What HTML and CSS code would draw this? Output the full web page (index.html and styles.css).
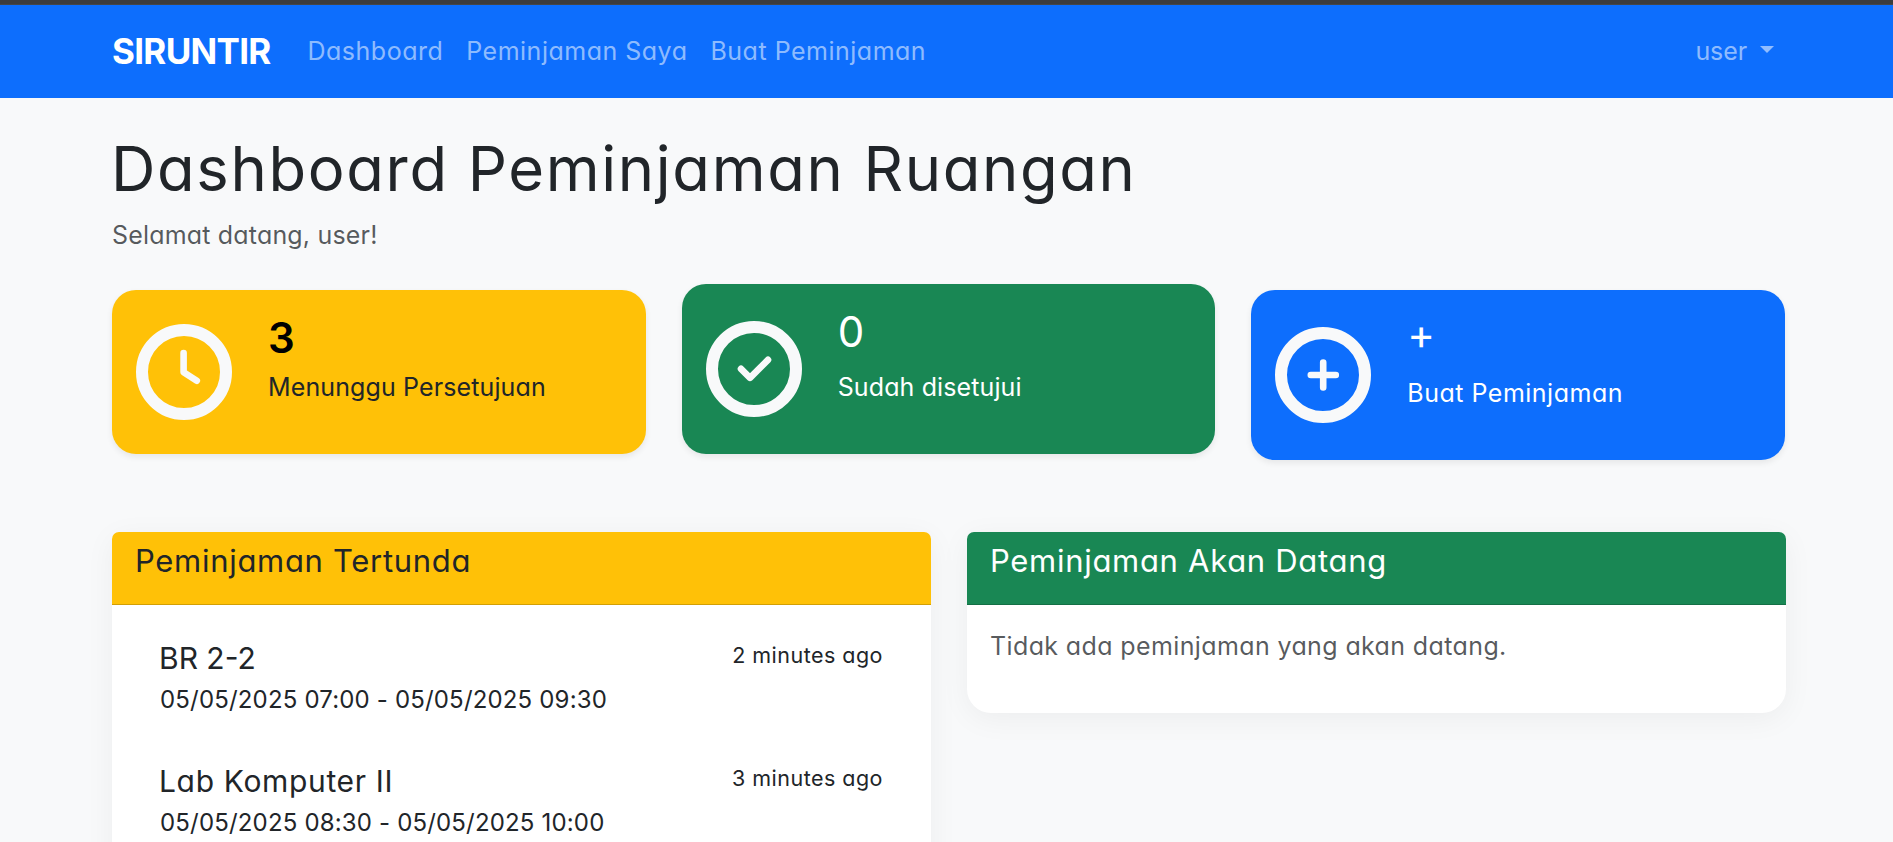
FILE: index.html
```html
<!DOCTYPE html>
<html lang="id">
<head>
<meta charset="utf-8">
<title>SIRUNTIR</title>
<link rel="stylesheet" href="styles.css">
</head>
<body>
<div class="window-edge"></div>
<nav class="navbar">
  <div class="container navbar-inner">
    <a class="brand">SIRUNTIR</a>
    <div class="nav-links">
      <a>Dashboard</a>
      <a>Peminjaman Saya</a>
      <a>Buat Peminjaman</a>
    </div>
    <a class="user-menu"><span>user</span><svg class="caret" viewBox="0 0 14 7"><path d="M0 0h14L7 7z"/></svg></a>
  </div>
</nav>
<main class="container main">
  <h1 class="title">Dashboard Peminjaman Ruangan</h1>
  <p class="welcome">Selamat datang, user!</p>

  <section class="stats">
    <article class="stat stat-warning">
      <svg class="stat-icon" viewBox="0 0 96 96"><circle class="ring" cx="48" cy="48" r="42"/><path class="mark" d="M47.6 29v19.2l13.2 8.6"/></svg>
      <div class="stat-text">
        <div class="stat-value">3</div>
        <p class="stat-label">Menunggu Persetujuan</p>
      </div>
    </article>
    <article class="stat stat-success">
      <svg class="stat-icon" viewBox="0 0 96 96"><circle class="ring" cx="48" cy="48" r="42"/><path class="mark" d="M35 47.8l9 9 18-18"/></svg>
      <div class="stat-text">
        <div class="stat-value">0</div>
        <p class="stat-label">Sudah disetujui</p>
      </div>
    </article>
    <article class="stat stat-primary">
      <svg class="stat-icon" viewBox="0 0 96 96"><circle class="ring" cx="48" cy="48" r="42"/><path class="mark" d="M48.2 35.5v25M35.8 48h25"/></svg>
      <div class="stat-text">
        <div class="stat-value">+</div>
        <p class="stat-label">Buat Peminjaman</p>
      </div>
    </article>
  </section>

  <section class="panels">
    <article class="panel">
      <header class="panel-head head-warning">Peminjaman Tertunda</header>
      <div class="list">
        <div class="item">
          <div>
            <h2 class="room room-code">BR 2-2</h2>
            <p class="period">05/05/2025 07:00 - 05/05/2025 09:30</p>
          </div>
          <span class="ago">2 minutes ago</span>
        </div>
        <div class="item">
          <div>
            <h2 class="room">Lab Komputer II</h2>
            <p class="period">05/05/2025 08:30 - 05/05/2025 10:00</p>
          </div>
          <span class="ago">3 minutes ago</span>
        </div>
      </div>
    </article>
    <article class="panel">
      <header class="panel-head head-success">Peminjaman Akan Datang</header>
      <p class="empty">Tidak ada peminjaman yang akan datang.</p>
    </article>
  </section>
</main>
</body>
</html>
```
FILE: styles.css
```css
* { box-sizing: border-box; }
html, body { height: 842px; overflow: hidden; }
body {
  margin: 0;
  background: #f8f9fa;
  color: #212529;
  font: 400 25px/36px Inter, sans-serif;
  font-feature-settings: "cv11";
}
h1, h2, p { margin: 0; font-weight: 400; }
.container { width: 1674px; margin-left: 112px; }

.window-edge { height: 5px; background: #3c3c3c; border-bottom: 1px solid #464646; }
.navbar { height: 93px; background: #0d6efd; }
.navbar-inner { height: 100%; padding-bottom: 1px; display: flex; align-items: center; }
.brand { width: 195.5px; color: #fff; font-size: 35px; font-weight: 700; letter-spacing: -.7px; }
.nav-links { display: flex; gap: 23px; letter-spacing: .5px; color: rgba(255,255,255,.55); }
.user-menu { margin: 0 12px 0 auto; display: flex; align-items: center; gap: 13px; letter-spacing: -.1px; color: rgba(255,255,255,.55); }
.caret { width: 14px; height: 7px; margin-top: -3px; fill: currentColor; }

.main { padding-top: 35px; }
.title { font-size: 61.5px; line-height: 72px; letter-spacing: 1.65px; margin: 0 0 12px -1px; }
.welcome { margin-bottom: 31px; color: rgba(33,37,41,.75); letter-spacing: .18px; }

.stats { display: grid; grid-template-columns: repeat(3, 1fr); gap: 36px; align-items: start; width: 1673px; margin-bottom: 72px; }
.stat {
  display: flex;
  align-items: center;
  gap: 36px;
  height: 170px;
  padding: 0 24px;
  border-radius: 24px;
  color: #fff;
  box-shadow: 0 3px 6px rgba(0,0,0,.075);
}
.stat-warning { height: 164px; margin-top: 6px; background: #ffc107; color: #212529; }
.stat-success { background: #198754; }
.stat-primary { margin-top: 6px; background: #0d6efd; }
.stat-icon { width: 96px; height: 96px; flex: none; fill: none; stroke: #f8f9fa; }
.ring { stroke-width: 12; }
.mark { stroke-width: 6.6; stroke-linecap: round; stroke-linejoin: round; }
.stat-text { align-self: stretch; padding-top: 24px; }
.stat-value { font-size: 42px; line-height: 48px; margin-bottom: 13px; }
.stat-warning .stat-value { color: #000; font-weight: 600; margin-bottom: 7px; }
.stat-primary .stat-value { line-height: 40px; margin-bottom: 21px; }
.stat-label { letter-spacing: .12px; }
.stat-primary .stat-label { letter-spacing: .5px; }

.panels { display: grid; grid-template-columns: 1fr 1fr; gap: 36px; align-items: start; }
.panel { background: #fff; border-radius: 7px 7px 24px 24px; box-shadow: 0 6px 30px rgba(0,0,0,.05); }
.panel-head {
  height: 73px;
  padding: 11px 23px;
  border-bottom: 1px solid rgba(0,0,0,.175);
  border-radius: 7px 7px 0 0;
  font-size: 31px;
  letter-spacing: .7px;
}
.head-warning { background: #ffc107; }
.head-success { background: #198754; color: #fff; }
.list { padding: 35px 48px 24px; }
.item { display: flex; justify-content: space-between; height: 123px; }
.room { font-size: 30px; margin: 0 0 6px -1px; letter-spacing: .66px; }
.room-code { letter-spacing: 0; }
.period { font-size: 24px; letter-spacing: .17px; }
.ago { font-size: 21.5px; line-height: 31px; letter-spacing: .48px; }
.empty { padding: 23px 23px 49px; color: rgba(33,37,41,.75); letter-spacing: .38px; }
```
